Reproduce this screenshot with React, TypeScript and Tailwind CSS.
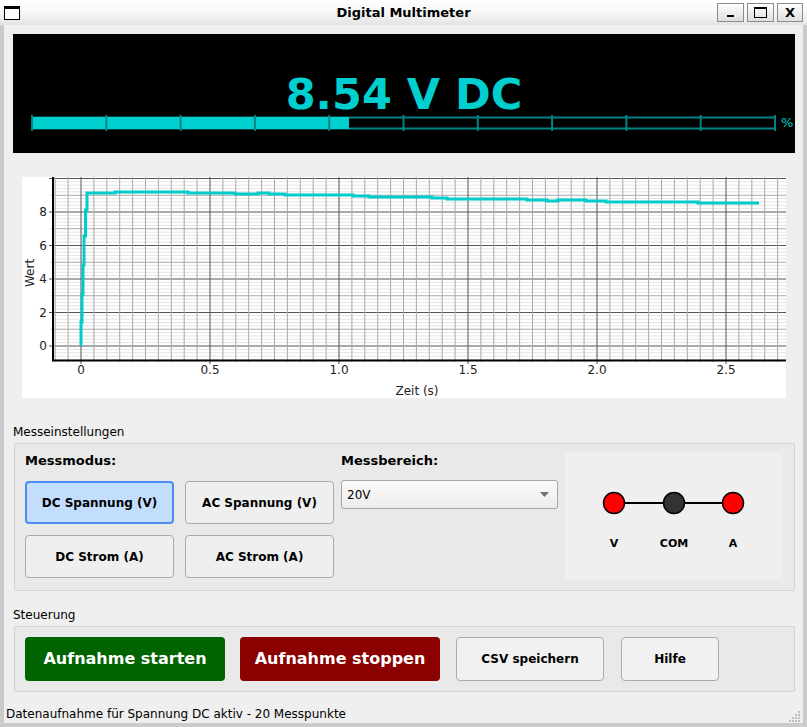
import React from "react";

const CYAN = "#00cfcf";
const TEAL = "#008484";

// chart mapping (svg coords, panel origin at page 22,177)
const X = (t: number) => 59 + 258 * t;
const Y = (v: number) => 169 - 16.75 * v;

const curve: [number, number][] = [
  [81, 346], [81, 322], [82, 322], [82, 294], [83, 294], [83, 265], [84, 265], [84, 236],
  [85.5, 236], [85.5, 210], [87, 210], [87, 193], [115, 193], [115, 192], [188, 192],
  [188, 193], [235, 193], [235, 194], [258, 194], [258, 193], [269, 193], [269, 194],
  [285, 194], [285, 195], [353, 195], [353, 196], [369, 196], [369, 197], [432, 197],
  [432, 198], [447, 198], [447, 199], [527, 199], [527, 200], [547, 200], [547, 201],
  [558, 201], [558, 200], [586, 200], [586, 201], [606, 201], [606, 202], [698, 202],
  [698, 203], [759, 203],
];

function Chart() {
  const vLines = [];
  for (let k = -2; k <= 54; k++) {
    const x = 59 + 12.9 * k;
    const major = k % 10 === 0;
    vLines.push(
      <line key={"v" + k} x1={x} x2={x} y1={0} y2={major ? 187 : 185} stroke={major ? "#555" : "#a9a9a9"} strokeWidth={1} />
    );
  }
  const hLines = [];
  for (let i = -4; i <= 50; i++) {
    const v = i * 0.2;
    const y = Y(v);
    if (y < 0 || y > 183) continue;
    let col = "#e4e4e4";
    if (i % 10 === 0) col = "#555";
    else if (i % 5 === 0) col = "#a9a9a9";
    const isTick = i % 5 === 0;
    hLines.push(
      <line key={"h" + i} x1={isTick ? (i % 10 === 0 ? 27 : 29) : 31} x2={764} y1={y} y2={y} stroke={col} strokeWidth={1} />
    );
  }
  const pts = curve.map(([x, y]) => `${x - 22},${y - 177}`).join(" ");
  return (
    <svg width={764} height={221} className="block bg-white" style={{ fontFamily: "'DejaVu Sans', sans-serif" }}>
      {hLines}
      {vLines}
      <line x1={31} x2={31} y1={0} y2={184} stroke="#000" strokeWidth={2} />
      <line x1={30} x2={764} y1={183.5} y2={183.5} stroke="#000" strokeWidth={2} />
      <polyline points={pts} fill="none" stroke="#00cccc" strokeWidth={3} />
      {[0, 0.5, 1, 1.5, 2, 2.5].map((t) => (
        <text key={t} x={X(t)} y={197} fontSize={12} textAnchor="middle" fill="#222">
          {t === 0 ? "0" : t.toFixed(1)}
        </text>
      ))}
      {[0, 2, 4, 6, 8].map((v) => (
        <text key={v} x={25} y={Y(v) + 4} fontSize={12} textAnchor="end" fill="#222">
          {v}
        </text>
      ))}
      <text x={395} y={218} fontSize={12} textAnchor="middle" fill="#222">
        Zeit (s)
      </text>
      <text x={0} y={0} fontSize={12} textAnchor="middle" fill="#222" transform="translate(12,96) rotate(-90)">
        Wert
      </text>
    </svg>
  );
}

function Gauge() {
  const ticks = Array.from({ length: 11 }, (_, i) => 1 + i * 74.3);
  return (
    <svg width={745} height={16} className="block">
      <rect x={1} y={2.5} width={743} height={11} fill="none" stroke={TEAL} strokeWidth={2} />
      <rect x={1} y={2} width={317} height={12} fill={CYAN} />
      {ticks.map((x, i) => (
        <line key={i} x1={x} x2={x} y1={0} y2={16} stroke={TEAL} strokeWidth={2} />
      ))}
    </svg>
  );
}

function Terminals() {
  return (
    <svg width={217} height={126} className="block" style={{ fontFamily: "'DejaVu Sans', sans-serif" }}>
      <line x1={49} x2={168} y1={50} y2={50} stroke="#000" strokeWidth={2} />
      <circle cx={49} cy={50} r={10.5} fill="#ff0000" stroke="#000" strokeWidth={1.5} />
      <circle cx={109} cy={50} r={10.5} fill="#333333" stroke="#000" strokeWidth={1.5} />
      <circle cx={168} cy={50} r={10.5} fill="#ff0000" stroke="#000" strokeWidth={1.5} />
      <text x={49} y={94} fontSize={11} fontWeight="bold" textAnchor="middle">V</text>
      <text x={109} y={94} fontSize={11} fontWeight="bold" textAnchor="middle">COM</text>
      <text x={168} y={94} fontSize={11} fontWeight="bold" textAnchor="middle">A</text>
    </svg>
  );
}

function ModeBtn({ label, active }: { label: string; active?: boolean }) {
  return (
    <button
      className={
        active
          ? "h-[43px] rounded-[4px] border-2 border-[#4a8ef0] bg-[#c2defc] text-[12px] font-bold text-black"
          : "h-[43px] rounded-[4px] border border-[#ababab] bg-[#efefef] text-[12px] font-bold text-black"
      }
    >
      {label}
    </button>
  );
}

export default function App() {
  return (
    <div
      className="flex h-[727px] w-[807px] flex-col bg-[#efefef] text-black"
      style={{ fontFamily: "'DejaVu Sans', sans-serif" }}
    >
      {/* title bar */}
      <div className="relative flex h-[25px] items-center bg-gradient-to-b from-[#ffffff] via-[#f7f7f7] to-[#e3e3e3]">
        <div className="ml-[4px] h-[14px] w-[16px] border border-black border-t-[3px] bg-white" />
        <div className="absolute left-0 right-0 top-[3px] text-center text-[13px] font-bold">Digital Multimeter</div>
        <div className="ml-auto mr-[4px] flex gap-[3px]">
          <div className="flex h-[19px] w-[27px] items-end justify-center border border-[#8c8c8c] bg-gradient-to-b from-white to-[#dedede] pb-[4px]">
            <div className="h-[2px] w-[7px] bg-black" />
          </div>
          <div className="flex h-[19px] w-[27px] items-center justify-center border border-[#8c8c8c] bg-gradient-to-b from-white to-[#dedede]">
            <div className="h-[11px] w-[13px] border border-black border-t-2" />
          </div>
          <div className="flex h-[19px] w-[26px] items-center justify-center border border-[#8c8c8c] bg-gradient-to-b from-white to-[#dedede] text-[13px] font-bold leading-none">
            X
          </div>
        </div>
      </div>

      {/* body */}
      <div className="flex flex-1 flex-col border-x-4 border-b-4 border-[#cbcbcb]">
        {/* display */}
        <div className="ml-[9px] mr-[8px] mt-[9px] flex h-[119px] flex-col items-center bg-black pt-[40px]">
          <div className="text-[43px] font-bold leading-[40px]" style={{ color: CYAN }}>
            8.54 V DC
          </div>
          <div className="-mt-px flex w-full items-center pl-[18px]">
            <Gauge />
            <span className="ml-[5px] text-[13px]" style={{ color: CYAN }}>%</span>
          </div>
        </div>

        {/* chart */}
        <div className="ml-[18px] mt-[24px]">
          <Chart />
        </div>

        {/* Messeinstellungen */}
        <div className="ml-[9px] mt-[27px] text-[12px] leading-[15px]">Messeinstellungen</div>
        <div className="ml-[10px] mr-[8px] mt-[3px] flex h-[148px] rounded-[2px] border border-[#d2d2d2] bg-[#e9e9e9] pl-[10px] pt-[9px]">
          <div className="flex w-[309px] flex-col">
            <div className="text-[13px] font-bold leading-[16px]">Messmodus:</div>
            <div className="mt-[12px] grid grid-cols-2 gap-x-[11px] gap-y-[11px]">
              <ModeBtn label="DC Spannung (V)" active />
              <ModeBtn label="AC Spannung (V)" />
              <ModeBtn label="DC Strom (A)" />
              <ModeBtn label="AC Strom (A)" />
            </div>
          </div>
          <div className="ml-[7px] flex w-[217px] flex-col">
            <div className="text-[13px] font-bold leading-[16px]">Messbereich:</div>
            <div className="mt-[11px] flex h-[29px] items-center rounded-[3px] border border-[#a6a6a6] bg-gradient-to-b from-[#fbfbfb] to-[#ececec] pl-[5px] pr-[8px]">
              <span className="text-[12px]">20V</span>
              <svg width={9} height={5} className="ml-auto">
                <polygon points="0,0 9,0 4.5,5" fill="#707070" />
              </svg>
            </div>
          </div>
          <div className="ml-[7px] h-[126px] w-[217px] bg-[#efefef]">
            <Terminals />
          </div>
        </div>

        {/* Steuerung */}
        <div className="ml-[9px] mt-[17px] text-[12px] leading-[15px]">Steuerung</div>
        <div className="ml-[10px] mr-[8px] mt-[3px] flex h-[66px] items-start rounded-[2px] border border-[#d2d2d2] bg-[#e9e9e9] pl-[10px] pt-[10px]">
          <button className="h-[44px] w-[200px] rounded-[4px] bg-[#006400] text-[16px] font-bold text-white">
            Aufnahme starten
          </button>
          <button className="ml-[15px] h-[44px] w-[200px] rounded-[4px] bg-[#8b0000] text-[16px] font-bold text-white">
            Aufnahme stoppen
          </button>
          <button className="ml-[16px] h-[44px] w-[148px] rounded-[4px] border border-[#ababab] bg-[#f1f1f1] text-[12px] font-bold">
            CSV speichern
          </button>
          <button className="ml-[17px] h-[44px] w-[98px] rounded-[4px] border border-[#ababab] bg-[#f1f1f1] text-[12px] font-bold">
            Hilfe
          </button>
        </div>

        {/* status bar */}
        <div className="mt-auto flex h-[24px] items-center pl-[2px] pt-[5px]">
          <span className="text-[12px]">Datenaufnahme für Spannung DC aktiv - 20 Messpunkte</span>
          <svg width={12} height={12} className="ml-auto mr-[2px] mt-[4px]">
            {[
              [9, 1], [6, 4], [9, 4], [3, 7], [6, 7], [9, 7], [0, 10], [3, 10], [6, 10], [9, 10],
            ].map(([x, y], i) => (
              <rect key={i} x={x} y={y} width={2} height={2} fill="#bdbdbd" />
            ))}
          </svg>
        </div>
      </div>
    </div>
  );
}
